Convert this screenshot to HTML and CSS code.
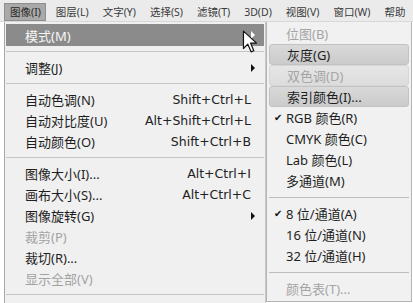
FILE: index.html
```html
<!DOCTYPE html>
<html lang="zh-CN">
<head>
    <meta charset="UTF-8">
    <title>图像菜单</title>
    <link rel="stylesheet" href="styles.css">
</head>
<body>
    <div class="menubar">
        <span class="bar-item active">图像(I)</span>
        <span class="bar-item">图层(L)</span>
        <span class="bar-item">文字(Y)</span>
        <span class="bar-item">选择(S)</span>
        <span class="bar-item">滤镜(T)</span>
        <span class="bar-item">3D(D)</span>
        <span class="bar-item">视图(V)</span>
        <span class="bar-item">窗口(W)</span>
        <span class="bar-item">帮助</span>
    </div>
    <div class="stage">
        <div class="menu">
            <div class="row hot"><span class="label">模式(M)</span><span class="arrow white"></span></div>
            <div class="sep"></div>
            <div class="row"><span class="label">调整(J)</span><span class="arrow"></span></div>
            <div class="sep"></div>
            <div class="row"><span class="label">自动色调(N)</span><span class="key">Shift+Ctrl+L</span></div>
            <div class="row"><span class="label">自动对比度(U)</span><span class="key">Alt+Shift+Ctrl+L</span></div>
            <div class="row"><span class="label">自动颜色(O)</span><span class="key">Shift+Ctrl+B</span></div>
            <div class="sep"></div>
            <div class="row"><span class="label">图像大小(I)...</span><span class="key">Alt+Ctrl+I</span></div>
            <div class="row"><span class="label">画布大小(S)...</span><span class="key">Alt+Ctrl+C</span></div>
            <div class="row"><span class="label">图像旋转(G)</span><span class="arrow"></span></div>
            <div class="row off"><span class="label">裁剪(P)</span></div>
            <div class="row"><span class="label">裁切(R)...</span></div>
            <div class="row off"><span class="label">显示全部(V)</span></div>
            <div class="sep"></div>
        </div>
        <div class="submenu">
            <div class="sub off"><span class="label">位图(B)</span></div>
            <div class="sub box"><span class="label">灰度(G)</span></div>
            <div class="sub off box faint"><span class="label">双色调(D)</span></div>
            <div class="sub box"><span class="label">索引颜色(I)...</span></div>
            <div class="sub"><span class="check">✔</span><span class="label">RGB 颜色(R)</span></div>
            <div class="sub"><span class="label">CMYK 颜色(C)</span></div>
            <div class="sub"><span class="label">Lab 颜色(L)</span></div>
            <div class="sub"><span class="label">多通道(M)</span></div>
            <div class="sep"></div>
            <div class="sub"><span class="check">✔</span><span class="label">8 位/通道(A)</span></div>
            <div class="sub"><span class="label">16 位/通道(N)</span></div>
            <div class="sub"><span class="label">32 位/通道(H)</span></div>
            <div class="sep"></div>
            <div class="sub off"><span class="label">颜色表(T)...</span></div>
        </div>
        <svg class="cursor" width="16" height="24" viewBox="0 0 14 22">
            <path d="M1 1 L1 17 L5 13 L8 20 L10.5 19 L7.5 12 L13 12 Z" fill="#fff" stroke="#111" stroke-width="1.1" stroke-linejoin="round"/>
        </svg>
    </div>
</body>
</html>
```

FILE: styles.css
```css
* { margin: 0; padding: 0; box-sizing: border-box; }
body { font-family: "Noto Sans", "Noto Sans CJK SC", sans-serif; font-size: 13px; color: #1e1e1e; background: #fff; width: 413px; height: 303px; overflow: hidden; }

.menubar { display: flex; align-items: center; height: 22px; background: #ebebeb; padding: 3px 0 1px 4px; border-bottom: 1px solid #d8d8d8; white-space: nowrap; overflow: hidden; }
.bar-item { flex: none; font-size: 10.5px; color: #3a3a3a; height: 18px; line-height: 17px; padding: 0 5px; margin-right: 2px; border: 1px solid transparent; }
.bar-item.active { background: #a9a9a9; border-color: #8e8e8e; color: #2a2a2a; padding: 0 4px 0 5px; margin-right: 4px; }

.stage { position: relative; display: flex; align-items: flex-start; }

.menu { width: 262px; margin-left: 4px; height: 281px; background: #f0f0f0; border-left: 1px solid #a8a8a8; border-right: 1px solid #c8c8c8; padding: 2px 1px 0 1px; }
.row { display: flex; align-items: center; height: 21px; padding: 0 13px 0 19px; white-space: nowrap; }
.row .label { flex: 1; }
.row .key { font-family: "DejaVu Sans", sans-serif; font-size: 12.5px; color: #222; }
.row.hot { background: #8b8b8b; color: #f6f6f6; height: 22px; }
.row.off { color: #a3a3a3; }
.arrow { width: 0; height: 0; border-top: 4px solid transparent; border-bottom: 4px solid transparent; border-left: 4px solid #111; margin-right: -4px; }
.arrow.white { border-left-color: #fff; }
.sep { height: 11px; display: flex; align-items: center; }
.sep::after { content: ""; display: block; width: 100%; height: 1px; background: #c4c4c4; }

.submenu { width: 146px; height: 280px; background: #f1f1f1; border: 1px solid #b4b4b4; border-top: none; padding: 1px 2px 0 2px; }
.sub { position: relative; display: flex; align-items: center; height: 21px; padding-left: 17px; white-space: nowrap; }
.sub.box { background: linear-gradient(#d9d9d9, #cbcbcb); border: 1px solid #c2c2c2; border-radius: 3px; }
.sub.faint { background: linear-gradient(#e6e6e6, #dcdcdc); border-color: #d6d6d6; }
.sub.off { color: #a5a5a5; }
.check { position: absolute; left: 5px; font-size: 9.5px; color: #111; }
.submenu .sep { height: 12px; }
.submenu .sep::after { background: #bdbdbd; }

.cursor { position: absolute; left: 242px; top: 8px; }
```
